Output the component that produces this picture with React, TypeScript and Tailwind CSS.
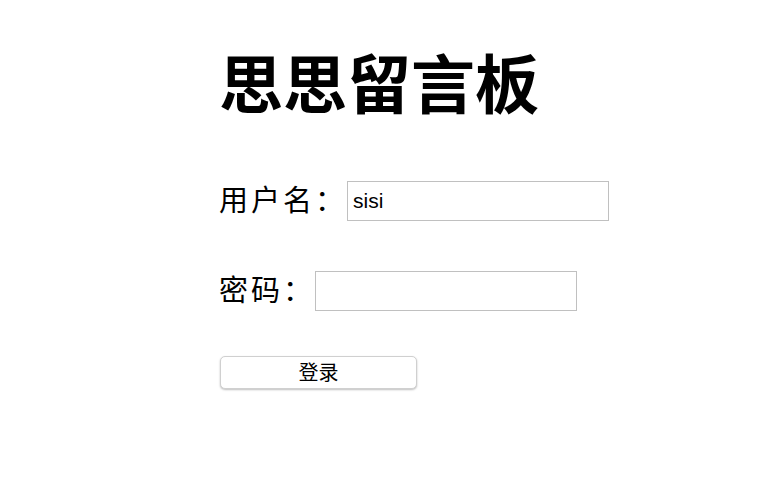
import React, { useState } from "react";

const FONT = {
  fontFamily: '"Liberation Sans", "Noto Sans CJK SC", sans-serif',
};

const App = () => {
  const [name, setName] = useState("sisi");
  const [pwd, setPwd] = useState("");

  return (
    <div className="w-[772px] h-[480px] bg-white text-black" style={FONT}>
      <div className="ml-[219px] pt-[46px] flex flex-col items-start">
        <h1 className="text-[64px] leading-[80px] font-bold">思思留言板</h1>

        <div className="mt-[55px] flex items-center h-[40px]">
          <label className="text-[29px] tracking-[3px] leading-[40px]">用户名：</label>
          <input
            className="w-[262px] h-[40px] border border-[#c0c0c0] px-[5px] text-[21px] outline-none"
            value={name}
            onChange={(e) => setName(e.target.value)}
          />
        </div>

        <div className="mt-[50px] flex items-center h-[40px]">
          <label className="text-[29px] tracking-[3px] leading-[40px]">密码：</label>
          <input
            type="password"
            className="w-[262px] h-[40px] border border-[#c0c0c0] px-[5px] text-[21px] outline-none"
            value={pwd}
            onChange={(e) => setPwd(e.target.value)}
          />
        </div>

        <button className="mt-[45px] ml-px w-[197px] h-[33px] rounded-[5px] border border-[#d0d0d0] bg-white shadow-[0_1px_2px_rgba(0,0,0,0.25)] text-[20px] leading-none">
          登录
        </button>
      </div>
    </div>
  );
};

export default App;
